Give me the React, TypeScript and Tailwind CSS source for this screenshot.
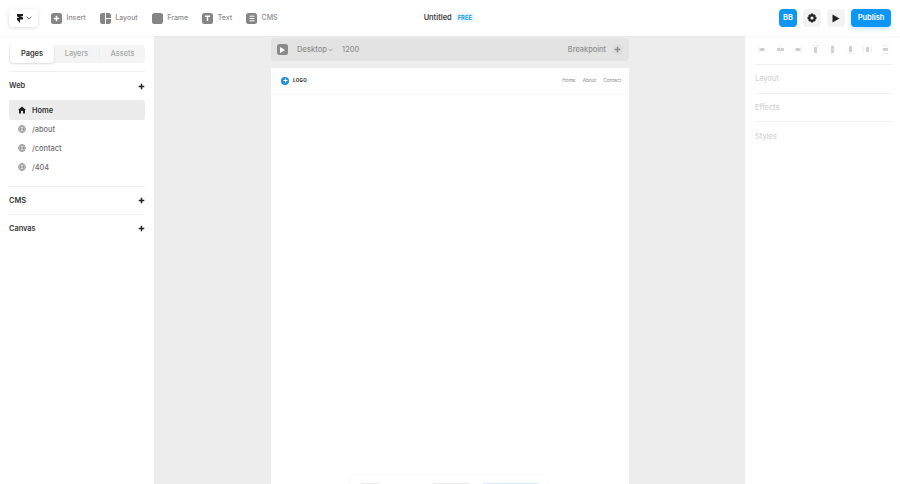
import React from "react";

const Plus = ({ c = "#fff", s = 7 }: { c?: string; s?: number }) => (
  <svg width={s} height={s} viewBox="0 0 8 8"><path d="M4 .8v6.400M.8 4h6.400" stroke={c} strokeWidth="1.700" /></svg>
);

const Tool = ({ label, icon }: { label: string; icon: React.ReactNode }) => (
  <div className="flex items-center gap-[4.500px]">
    {icon}
    <span className="mt-px text-[7px] font-medium text-[#8c8c8c]">{label}</span>
  </div>
);

const Box = ({ children }: { children?: React.ReactNode }) => (
  <div className="flex h-[11px] w-[11px] items-center justify-center rounded-[2.500px] bg-[#858585]">{children}</div>
);

const Globe = () => (
  <svg className="mb-[2px]" width="8" height="8" viewBox="0 0 10 10" fill="none" stroke="#8a8a8a" strokeWidth="1.200">
    <circle cx="5" cy="5" r="4.200" />
    <ellipse cx="5" cy="5" rx="1.800" ry="4.200" />
    <path d="M1 5h8" />
  </svg>
);

const PageRow = ({ label }: { label: string }) => (
  <div className="flex h-[19px] items-center pl-[9px]">
    <Globe />
    <span className="ml-[6px] text-[7.400px] font-medium leading-[8px] text-[#6f6f6f]">{label}</span>
  </div>
);

const Section = ({ label }: { label: string }) => (
  <div className="flex h-[28.500px] items-center justify-between border-t border-[#f0f0f0]">
    <span className="text-[7.400px] font-semibold text-[#3a3a3a]">{label}</span>
    <Plus c="#222" />
  </div>
);

const aligns: [string, string][] = [
  ["M1.500 3h5v3h-5z", "M.3 1v7"],
  ["M1 3h7v3H1z", "M4.500 1v7"],
  ["M2.500 3h5v3h-5z", "M8.700 1v7"],
  ["M3 2h3v6H3z", "M1 .4h7"],
  ["M3 1h3v7H3z", "M1 4.500h7"],
  ["M3 1h3v6H3z", "M1 8.600h7"],
  ["M3 2h3v5H3z", "M.7 1v7M8.300 1v7"],
  ["M2 3h5v3H2z", "M1 .7h7M1 8.300h7"],
];

export default function App() {
  return (
    <div className="relative flex h-[484px] w-[900px] flex-col overflow-hidden bg-white font-['Inter',sans-serif]">
      <header className="z-10 flex h-9 shrink-0 items-center bg-white px-[9px] shadow-[0_1px_2px_rgba(0,0,0,0.03)]">
        <div className="flex h-[18px] w-[29px] items-center justify-center gap-[3px] rounded-[4px] bg-white shadow-[0_1px_4px_rgba(0,0,0,0.14)]">
          <svg width="7" height="9" viewBox="0 0 7 9"><path d="M1 0h6v2.300H4L7 3.400v2.200H4V9L1 5.800V3.700h2.500L1 2.300z" fill="#1c1c1c" /></svg>
          <svg width="6" height="4" viewBox="0 0 6 4" fill="none"><path d="M.7.7 3 3 5.300.7" stroke="#666" strokeWidth="1" /></svg>
        </div>
        <div className="ml-[13px] flex items-center gap-[14px]">
          <Tool label="Insert" icon={<Box><Plus /></Box>} />
          <Tool
            label="Layout"
            icon={
              <div className="grid h-[11px] w-[11px] grid-cols-2 grid-rows-2 gap-px overflow-hidden rounded-[2.500px]">
                <div className="row-span-2 bg-[#858585]" />
                <div className="bg-[#858585]" />
                <div className="bg-[#858585]" />
              </div>
            }
          />
          <Tool label="Frame" icon={<Box />} />
          <Tool
            label="Text"
            icon={
              <Box>
                <svg width="7" height="7" viewBox="0 0 7 7" fill="none"><path d="M1 1.200h5M3.500 1.200V6" stroke="#fff" strokeWidth="1.400" /></svg>
              </Box>
            }
          />
          <Tool
            label="CMS"
            icon={
              <Box>
                <svg width="6" height="7" viewBox="0 0 6 7" fill="none"><path d="M.5 1.200h5M.5 3.500h5M.5 5.800h5" stroke="#fff" strokeWidth="1" /></svg>
              </Box>
            }
          />
        </div>
        <div className="ml-[146px] flex items-center gap-[4px]">
          <span className="text-[7.400px] font-semibold text-[#444]">Untitled</span>
          <span className="rounded-[2px] bg-[#e9f5ff] px-[2px] py-px text-[5.800px] font-bold leading-[7px] text-[#1a9bf5]">FREE</span>
        </div>
        <div className="ml-auto flex items-center gap-[6px]">
          <div className="flex h-[18px] w-[18px] items-center justify-center rounded-[4px] bg-[#0f96f5] text-[7.500px] font-semibold text-white">BB</div>
          <div className="flex h-[18px] w-[18px] items-center justify-center rounded-[4px] bg-[#f3f3f3]">
            <svg width="10" height="10" viewBox="0 0 10 10">
              <path fillRule="evenodd" d="M4 .5h2l.3 1.300 1-.6 1.500 1.500-.6 1 1.300.3v2l-1.300.3.600 1-1.500 1.500-1-.6L6 9.500H4l-.3-1.300-1 .6L1.200 7.300l.6-1L.5 6V4l1.300-.3-.6-1L2.700 1.200l1 .6zM5 3.400a1.600 1.600 0 1 0 0 3.200 1.600 1.600 0 0 0 0-3.200z" fill="#222" />
            </svg>
          </div>
          <div className="flex h-[18px] w-[18px] items-center justify-center rounded-[4px] bg-[#f3f3f3]">
            <svg width="8" height="9" viewBox="0 0 8 9"><path d="M.5.500 7.500 4.500.5 8.500z" fill="#222" /></svg>
          </div>
          <div className="flex h-[18px] w-10 items-center justify-center rounded-[4px] bg-[#0f96f5] text-[7.500px] font-semibold text-white shadow-[0_2px_5px_rgba(15,150,245,0.25)]">Publish</div>
        </div>
      </header>

      <div className="flex min-h-0 flex-1">
        <aside className="flex w-[154px] shrink-0 flex-col bg-white px-[9px] pt-[9px]">
          <div className="flex h-[18px] items-center rounded-[4px] bg-[#f4f4f4] pl-px text-[7.400px] font-medium text-[#a6a6a6]">
            <div className="flex h-full w-[44px] items-center justify-center rounded-[4px] bg-white font-semibold text-[#333] shadow-[0_1px_2px_rgba(0,0,0,0.15)]">Pages</div>
            <div className="flex h-[10px] w-[46px] items-center justify-center border-r border-[#ececec]">Layers</div>
            <div className="flex h-full flex-1 items-center justify-center">Assets</div>
          </div>
          <div className="mt-[8px] flex h-[29px] items-center justify-between border-t border-[#f0f0f0]">
            <span className="text-[7.400px] font-semibold text-[#3a3a3a]">Web</span>
            <Plus c="#222" />
          </div>
          <div className="flex h-5 items-center rounded-[3px] bg-[#ececec] pl-[9px]">
            <svg width="8" height="8" viewBox="0 0 8 8"><path d="M4 .5 8 4H7v3.500H5V5H3v2.500H1V4H0z" fill="#222" /></svg>
            <span className="ml-[6px] mt-[2px] text-[7.400px] font-semibold text-[#333]">Home</span>
          </div>
          <PageRow label="/about" />
          <PageRow label="/contact" />
          <PageRow label="/404" />
          <div className="mt-[8.500px]">
            <Section label="CMS" />
            <Section label="Canvas" />
          </div>
        </aside>

        <main className="relative flex min-w-0 flex-1 bg-[#ededed] pl-[117px] pt-[2px]">
          <div className="flex w-[358px] flex-col">
            <div className="flex h-[23px] shrink-0 items-center rounded-[4px] bg-[#e3e3e3] pl-[6px] pr-[6px]">
              <div className="flex h-[11px] w-[11px] items-center justify-center rounded-[2.500px] bg-[#8a8a8a]">
                <svg width="5" height="6" viewBox="0 0 5 6"><path d="M0 0l5 3-5 3z" fill="#fff" /></svg>
              </div>
              <span className="ml-[9px] text-[7.600px] font-medium text-[#8f8f8f]">Desktop</span>
              <svg className="ml-[1px]" width="5" height="4" viewBox="0 0 6 4" fill="none"><path d="M.7.7 3 3 5.300.7" stroke="#8f8f8f" strokeWidth="1" /></svg>
              <span className="ml-[9px] text-[7.400px] font-medium text-[#8f8f8f]">1200</span>
              <span className="ml-auto text-[7.400px] font-medium text-[#8f8f8f]">Breakpoint</span>
              <div className="ml-[6px] flex h-[11px] w-[11px] items-center justify-center rounded-full bg-[#dcdcdc]"><Plus c="#8a8a8a" /></div>
            </div>
            <div className="mt-[7px] flex-1 bg-white">
              <div className="flex h-[26px] items-center justify-between border-b border-[#fafafa] pl-[10px] pr-[8px]">
                <div className="flex items-center gap-[4px]">
                  <div className="flex h-2 w-2 items-center justify-center rounded-full bg-[#1c8fe0]"><Plus s={5} /></div>
                  <span className="mt-[2px] text-[4.500px] font-bold tracking-[0.3px] text-[#222]">LOGO</span>
                </div>
                <div className="flex gap-[7px] text-[4.800px] text-[#8a8a8a]">
                  <span>Home</span><span>About</span><span>Contact</span>
                </div>
              </div>
            </div>
          </div>
          <div className="absolute bottom-[-12px] left-[197px] flex h-5 w-[195px] items-center rounded-[6px] bg-white pl-[9px] opacity-60 shadow-[0_0_6px_rgba(0,0,0,0.04)]">
            <div className="h-[6px] w-[20px] rounded-[2px] bg-[#dcdcdc]" />
            <div className="ml-[52px] h-[6px] w-[38px] rounded-[2px] bg-[#dcdcdc]" />
            <div className="ml-[12px] h-[6px] w-[58px] rounded-[2px] bg-[#bfe3fb]" />
          </div>
        </main>

        <aside className="flex w-[155px] shrink-0 flex-col bg-white pl-[10px] pr-[8px] text-[7.400px] font-medium text-[#d2d2d2]">
          <div className="flex h-[29px] items-center gap-[8.500px] border-b border-[#f0f0f0] pl-[3px]">
            {aligns.map(([bar, line]) => (
              <svg key={bar} className="mb-[2px]" width="9" height="9" viewBox="0 0 9 9" fill="none">
                <path d={bar} fill="#d0d0d0" />
                <path d={line} stroke="#e4e4e4" strokeWidth="0.700" />
              </svg>
            ))}
          </div>
          <div className="flex h-[28.500px] items-center border-b border-[#f0f0f0]">Layout</div>
          <div className="flex h-[28.500px] items-center border-b border-[#f0f0f0]">Effects</div>
          <div className="flex h-[28.500px] items-center">Styles</div>
        </aside>
      </div>
    </div>
  );
}
